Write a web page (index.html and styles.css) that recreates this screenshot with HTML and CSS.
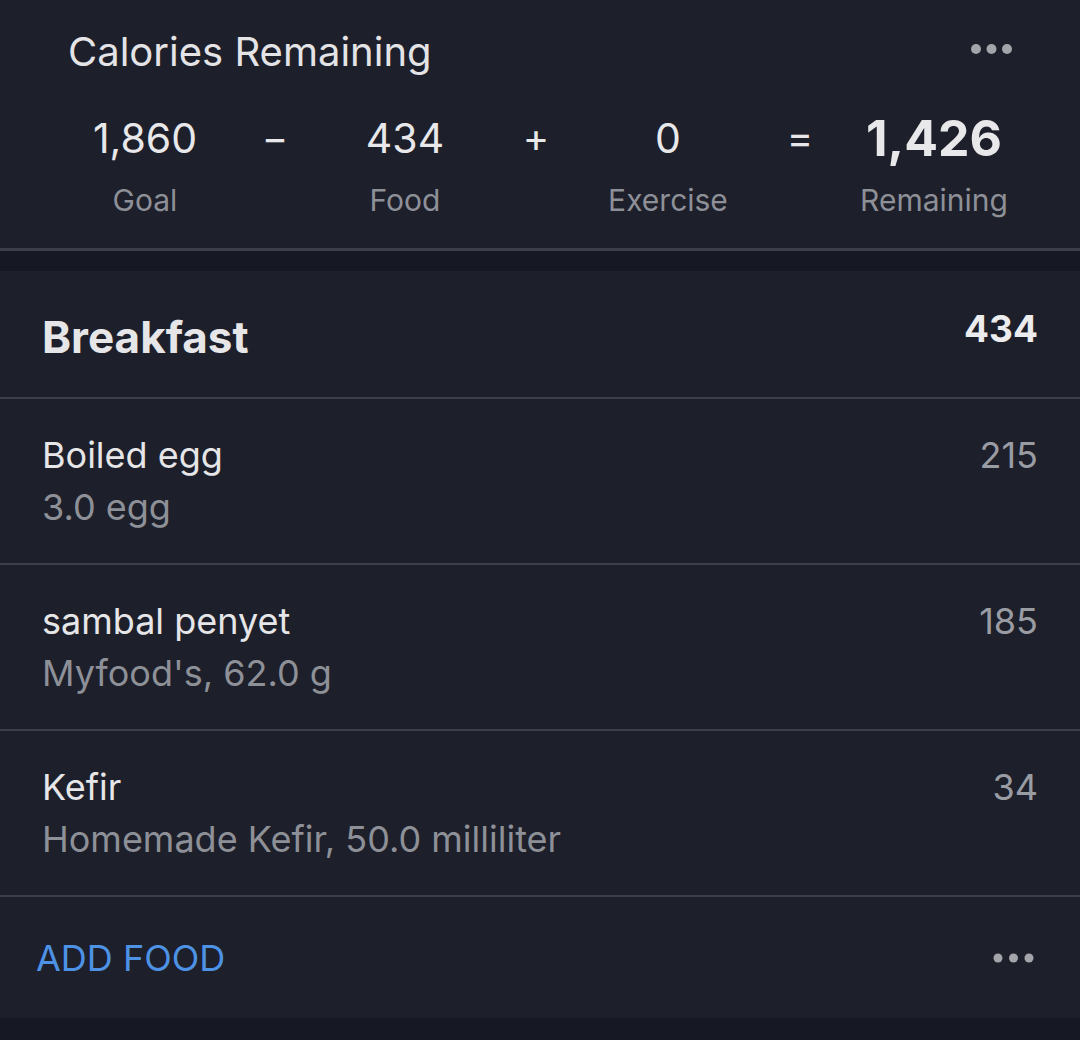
FILE: index.html
```html
<!DOCTYPE html>
<html>
<head>
<meta charset="utf-8">
<link rel="stylesheet" href="styles.css">
</head>
<body>
<section class="summary">
  <div class="summary-head">
    <h1 class="summary-title">Calories Remaining</h1>
    <svg class="dots" width="41" height="10" viewBox="0 0 41 10"><circle cx="5" cy="5" r="5"/><circle cx="20.5" cy="5" r="5"/><circle cx="36" cy="5" r="5"/></svg>
  </div>
  <div class="equation">
    <div class="num">1,860</div>
    <div class="op">−</div>
    <div class="num">434</div>
    <div class="op">+</div>
    <div class="num">0</div>
    <div class="op">=</div>
    <div class="num num-bold">1,426</div>
    <div class="lbl">Goal</div>
    <div></div>
    <div class="lbl">Food</div>
    <div></div>
    <div class="lbl">Exercise</div>
    <div></div>
    <div class="lbl">Remaining</div>
  </div>
</section>

<section class="meal">
  <div class="meal-head">
    <h2 class="meal-title">Breakfast</h2>
    <div class="meal-total">434</div>
  </div>
  <div class="food">
    <div class="food-info">
      <div class="food-name">Boiled egg</div>
      <div class="food-desc">3.0 egg</div>
    </div>
    <div class="food-cal">215</div>
  </div>
  <div class="food">
    <div class="food-info">
      <div class="food-name">sambal penyet</div>
      <div class="food-desc">Myfood's, 62.0 g</div>
    </div>
    <div class="food-cal">185</div>
  </div>
  <div class="food">
    <div class="food-info">
      <div class="food-name">Kefir</div>
      <div class="food-desc">Homemade Kefir, 50.0 milliliter</div>
    </div>
    <div class="food-cal">34</div>
  </div>
  <div class="meal-foot">
    <span class="add-food">ADD FOOD</span>
    <svg class="dots" width="41" height="10" viewBox="0 0 41 10"><circle cx="5" cy="5" r="4.5"/><circle cx="20.5" cy="5" r="4.5"/><circle cx="36" cy="5" r="4.5"/></svg>
  </div>
</section>
</body>
</html>
```

FILE: styles.css
```css
* { box-sizing: border-box; }
html, body {
  margin: 0;
  padding: 0;
  background: #161824;
  font-family: Inter, "Noto Sans", "Liberation Sans", sans-serif;
  color: #e6e6e8;
}
body { width: 1080px; height: 1040px; overflow: hidden; }

.summary {
  background: #1d1f2a;
  padding: 30px 68px 0 68px;
  border-bottom: 3px solid #3c3f4a;
  height: 251px;
}
.summary-head {
  display: flex;
  align-items: center;
  justify-content: space-between;
  height: 44px;
}
.summary-title {
  margin: 0;
  font-size: 40px;
  line-height: 44px;
  font-weight: 400;
  color: #e4e4e7;
}
.dots { fill: #a3a5ab; display: block; }
.summary-head .dots { margin-top: -6px; }

.equation {
  margin-top: 36px;
  margin-left: 12px;
  display: grid;
  grid-template-columns: 130px 130px 130px 132px 132px 132px 136px;
  grid-template-rows: 56px 40px;
  row-gap: 14px;
  justify-items: center;
  white-space: nowrap;
}
.num {
  font-size: 41px;
  line-height: 56px;
  color: #e8e8ea;
}
.num-bold {
  font-size: 50px;
  font-weight: 700;
}
.op {
  font-size: 40px;
  line-height: 56px;
  color: #e8e8ea;
}
.lbl {
  font-size: 30px;
  line-height: 40px;
  color: #8e9098;
}

.meal {
  margin-top: 20px;
  background: #1d1f2a;
}
.meal-head {
  display: flex;
  justify-content: space-between;
  align-items: flex-start;
  padding: 0 42px;
  height: 128px;
  border-bottom: 2px solid #3c3f4a;
}
.meal-title {
  margin: 38px 0 0;
  font-size: 44px;
  line-height: 56px;
  font-weight: 700;
  color: #e6e6e8;
}
.meal-total {
  margin-top: 36px;
  font-size: 37px;
  line-height: 44px;
  font-weight: 700;
  color: #ececee;
}

.food {
  display: flex;
  justify-content: space-between;
  align-items: flex-start;
  padding: 30px 42px 0;
  height: 166px;
  border-bottom: 2px solid #3c3f4a;
}
.food-name {
  font-size: 36px;
  line-height: 52px;
  color: #e6e6e8;
}
.food-desc {
  font-size: 36px;
  line-height: 52px;
  color: #8e9098;
}
.food-cal {
  font-size: 36px;
  line-height: 52px;
  color: #9a9ca3;
}

.meal-foot {
  display: flex;
  justify-content: space-between;
  align-items: center;
  height: 121px;
  padding: 0 46px 0 36px;
}
.add-food {
  font-size: 36px;
  font-weight: 400;
  color: #4d92e4;
}
```
